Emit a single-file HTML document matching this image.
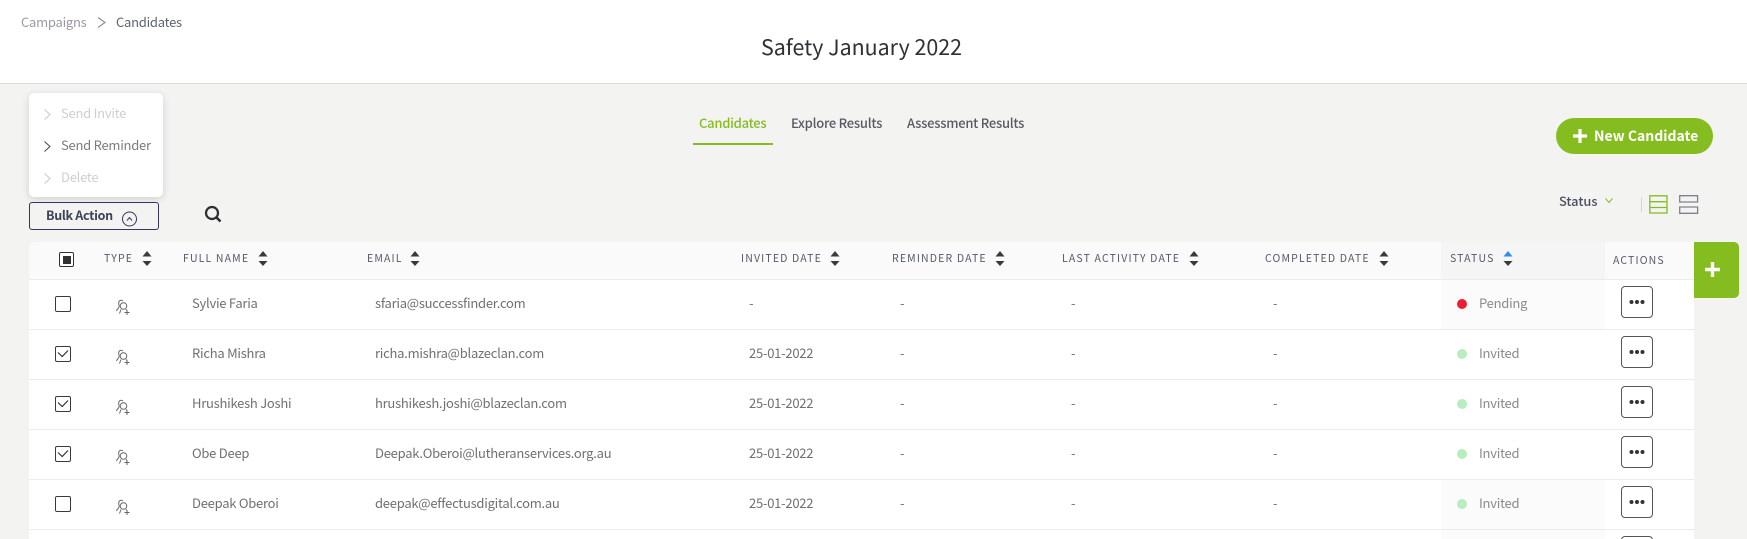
<!DOCTYPE html>
<html><head><meta charset="utf-8"><style>
html,body{margin:0;padding:0;width:1747px;height:539px;overflow:hidden}
#p{width:1747px;height:539px;position:relative;overflow:hidden;background:#f3f3f2;font-family:"Noto Sans CJK JP","Liberation Sans",sans-serif;font-size:13px;letter-spacing:-.25px;color:#707070}
.a{position:absolute}
.t{position:absolute;white-space:nowrap;line-height:20px;height:20px}
.h{font-size:10.5px;letter-spacing:1.15px;color:#555a66}
.row{position:absolute;left:29px;width:1665px;height:49px;background:#fff;border-bottom:1px solid #ececec}
.cb{position:absolute;left:26px;top:16px;width:14px;height:14px;border:1.3px solid #3a3a3a;border-radius:2px;background:#fff}
.btn{position:absolute;left:1592px;top:6px;width:30px;height:30px;border:1.3px solid #555;border-radius:4px;background:#fff}
.dot{position:absolute;left:1428px;top:19px;width:10px;height:10px;border-radius:50%;background:#b9ecbf}
.row .t{top:13px}
.s{position:absolute;width:10px;height:16px}
svg{display:block;overflow:visible}
</style></head><body><div id="p">
<svg width="0" height="0" style="position:absolute"><defs>
<symbol id="sort" viewBox="0 0 10 16"><path d="M5 0L9.5 5.5H.5Z" fill="#3a3a3a"/><path d="M.5 10H9.5L5 15Z" fill="#3a3a3a"/></symbol>
<symbol id="ty" viewBox="0 0 14 16"><g fill="none" stroke="#666" stroke-width="1"><circle cx="7.5" cy="7" r="3.3"/><path d="M7 2C5 .5 2.5 1.5 2.7 4.5 2.8 6 3.5 7 3 8 2.5 9.5 1 10 .5 12"/><path d="M5 10.5L3.5 14.5M10 10.3L11 11.5"/><path d="M11 11V16M8.5 13.5H13.5"/></g></symbol>
<symbol id="dots" viewBox="0 0 30 30"><g fill="#333"><circle cx="9.5" cy="15" r="2"/><circle cx="15" cy="15" r="2"/><circle cx="20.5" cy="15" r="2"/></g></symbol>
<symbol id="ck" viewBox="0 0 14 14"><path d="M2 5.5L6.2 9.5 12 3.5" fill="none" stroke="#333" stroke-width="1.2"/></symbol>
</defs></svg>

<!-- header -->
<div class="a" style="left:0;top:0;width:1747px;height:83px;background:#fff;border-bottom:1.5px solid #dcdcdc"></div>
<div class="t" style="left:21px;top:12px;color:#9b97a3">Campaigns</div>
<svg class="a" style="left:97px;top:17px" width="9" height="11"><path d="M1 .5L8 5.5 1 10.5" fill="none" stroke="#8c8c8c" stroke-width="1.1"/></svg>
<div class="t" style="left:116px;top:12px;color:#5c6270">Candidates</div>
<div class="t" style="left:761px;top:37px;font-size:21.4px;letter-spacing:0;color:#2f3136">Safety January 2022</div>

<!-- tabs -->
<div class="t" style="left:699px;top:113px;color:#85bc20;font-weight:500">Candidates</div>
<div class="a" style="left:693px;top:143px;width:80px;height:2px;background:#85bc20"></div>
<div class="t" style="left:791px;top:113px;color:#565a62;font-weight:500">Explore Results</div>
<div class="t" style="left:907px;top:113px;color:#565a62;font-weight:500">Assessment Results</div>

<!-- bulk menu -->
<div class="a" style="left:29px;top:93px;width:134px;height:104px;background:#fff;border-radius:5px;box-shadow:0 2px 8px rgba(0,0,0,.14)"></div>
<svg class="a" style="left:44px;top:109px" width="7" height="11"><path d="M.5 .5L6 5.5 .5 10.5" fill="none" stroke="#c9c9c9" stroke-width="1"/></svg>
<div class="t" style="left:61px;top:103px;color:#cfcfcf">Send Invite</div>
<svg class="a" style="left:44px;top:141px" width="7" height="11"><path d="M.5 .5L6 5.5 .5 10.5" fill="none" stroke="#444" stroke-width="1"/></svg>
<div class="t" style="left:61px;top:135px;color:#7c7c7c">Send Reminder</div>
<svg class="a" style="left:44px;top:173px" width="7" height="11"><path d="M.5 .5L6 5.5 .5 10.5" fill="none" stroke="#c9c9c9" stroke-width="1"/></svg>
<div class="t" style="left:61px;top:167px;color:#cfcfcf">Delete</div>

<!-- bulk button -->
<div class="a" style="left:29px;top:202px;width:128px;height:26px;border:1px solid #35355f;border-radius:3px;background:#f3f3f2"></div>
<div class="t" style="left:46px;top:205px;color:#3c4356;font-weight:700;font-size:12.5px;letter-spacing:-.3px">Bulk Action</div>
<svg class="a" style="left:122px;top:211px" width="16" height="16"><circle cx="7.5" cy="8" r="7" fill="none" stroke="#35355f" stroke-width="1"/><path d="M5 9.5L7.5 6.5 10 9.5" fill="none" stroke="#35355f" stroke-width="1"/></svg>
<svg class="a" style="left:204px;top:205px" width="18" height="18"><circle cx="8" cy="8" r="6" fill="none" stroke="#2e2e2e" stroke-width="2.2"/><path d="M12.5 12.5L16.5 16.5" stroke="#2e2e2e" stroke-width="2.6"/></svg>

<!-- new candidate -->
<div class="a" style="left:1556px;top:118px;width:157px;height:36px;border-radius:18px;background:#85bc20"></div>
<svg class="a" style="left:1573px;top:129px" width="14" height="14"><path d="M7 0V14M0 7H14" stroke="#fff" stroke-width="3.2"/></svg>
<div class="t" style="left:1594px;top:126px;color:#fff;font-weight:700;font-size:14px;letter-spacing:0">New Candidate</div>

<!-- status filter + views -->
<div class="t" style="left:1559px;top:191px;color:#4a4d60;font-weight:500;font-size:12.8px;letter-spacing:0">Status</div>
<svg class="a" style="left:1605px;top:198px" width="8" height="6"><path d="M.5 .5L4 4.5 7.5 .5" fill="none" stroke="#85bc20" stroke-width="1"/></svg>
<div class="a" style="left:1641px;top:197px;width:1px;height:15px;background:#d4d4d2"></div>
<svg class="a" style="left:1649px;top:195px" width="19" height="19"><path d="M.8.8H18V18H.8ZM.8 6.7H18M.8 12.5H18" fill="none" stroke="#85bc20" stroke-width="1.3"/></svg>
<svg class="a" style="left:1679px;top:195px" width="20" height="19"><path d="M.7.7H18.6V7H.7ZM.7 12H18.6V18.3H.7Z" fill="none" stroke="#80808f" stroke-width="1.3"/></svg>

<!-- green tab -->
<div class="a" style="left:1690px;top:242px;width:49px;height:56px;background:#85bc20;border-radius:5px"></div>
<svg class="a" style="left:1705px;top:262px" width="15" height="15"><path d="M7.5 0V15M0 7.5H15" stroke="#fff" stroke-width="3.4"/></svg>

<!-- table head -->
<div class="a" style="left:29px;top:242px;width:1665px;height:37px;background:#fafafa;border-radius:4px 0 0 0;border-bottom:1px solid #ececec"></div>
<div class="a" style="left:1441px;top:242px;width:164px;height:37px;background:#f5f5f5"></div>
<div class="a" style="left:59px;top:252px;width:13px;height:13px;border:1.5px solid #333;border-radius:2px;background:#fff"></div>
<div class="a" style="left:63px;top:256px;width:8px;height:8px;background:#333"></div>
<div class="t h" style="left:104px;top:249px">TYPE</div><svg class="s" style="left:142px;top:251px"><use href="#sort"/></svg>
<div class="t h" style="left:183px;top:249px">FULL NAME</div><svg class="s" style="left:258px;top:251px"><use href="#sort"/></svg>
<div class="t h" style="left:367px;top:249px">EMAIL</div><svg class="s" style="left:410px;top:251px"><use href="#sort"/></svg>
<div class="t h" style="left:741px;top:249px">INVITED DATE</div><svg class="s" style="left:830px;top:251px"><use href="#sort"/></svg>
<div class="t h" style="left:892px;top:249px">REMINDER DATE</div><svg class="s" style="left:995px;top:251px"><use href="#sort"/></svg>
<div class="t h" style="left:1062px;top:249px">LAST ACTIVITY DATE</div><svg class="s" style="left:1189px;top:251px"><use href="#sort"/></svg>
<div class="t h" style="left:1265px;top:249px">COMPLETED DATE</div><svg class="s" style="left:1379px;top:251px"><use href="#sort"/></svg>
<div class="t h" style="left:1450px;top:249px">STATUS</div>
<svg class="s" style="left:1503px;top:251px" viewBox="0 0 10 16"><path d="M5 0L9.5 5.5H.5Z" fill="#2d8cf0"/><path d="M.5 10H9.5L5 15Z" fill="#3a3a3a"/></svg>
<div class="t h" style="left:1613px;top:251px">ACTIONS</div>

<!-- rows -->
<div class="row" style="top:280px">
<div class="a" style="left:1412px;top:0;width:164px;height:49px;background:#fbfbfb"></div>
<div class="cb"></div><svg class="a" style="left:87px;top:19px" width="14" height="16"><use href="#ty"/></svg>
<div class="t" style="left:163px">Sylvie Faria</div><div class="t" style="left:346px">sfaria@successfinder.com</div><div class="t" style="left:720px">-</div><div class="t" style="left:871px">-</div><div class="t" style="left:1042px">-</div><div class="t" style="left:1244px">-</div>
<div class="dot" style="background:#f01c33"></div><div class="t" style="left:1450px;color:#8a8a8a">Pending</div><div class="btn"><svg width="30" height="30"><use href="#dots"/></svg></div></div>

<div class="row" style="top:330px">
<div class="cb"><svg width="14" height="14"><use href="#ck"/></svg></div><svg class="a" style="left:87px;top:19px" width="14" height="16"><use href="#ty"/></svg>
<div class="t" style="left:163px">Richa Mishra</div><div class="t" style="left:346px">richa.mishra@blazeclan.com</div><div class="t" style="left:720px">25-01-2022</div><div class="t" style="left:871px">-</div><div class="t" style="left:1042px">-</div><div class="t" style="left:1244px">-</div>
<div class="dot"></div><div class="t" style="left:1450px;color:#8a8a8a">Invited</div><div class="btn"><svg width="30" height="30"><use href="#dots"/></svg></div></div>

<div class="row" style="top:380px">
<div class="cb"><svg width="14" height="14"><use href="#ck"/></svg></div><svg class="a" style="left:87px;top:19px" width="14" height="16"><use href="#ty"/></svg>
<div class="t" style="left:163px">Hrushikesh Joshi</div><div class="t" style="left:346px">hrushikesh.joshi@blazeclan.com</div><div class="t" style="left:720px">25-01-2022</div><div class="t" style="left:871px">-</div><div class="t" style="left:1042px">-</div><div class="t" style="left:1244px">-</div>
<div class="dot"></div><div class="t" style="left:1450px;color:#8a8a8a">Invited</div><div class="btn"><svg width="30" height="30"><use href="#dots"/></svg></div></div>

<div class="row" style="top:430px">
<div class="cb"><svg width="14" height="14"><use href="#ck"/></svg></div><svg class="a" style="left:87px;top:19px" width="14" height="16"><use href="#ty"/></svg>
<div class="t" style="left:163px">Obe Deep</div><div class="t" style="left:346px">Deepak.Oberoi@lutheranservices.org.au</div><div class="t" style="left:720px">25-01-2022</div><div class="t" style="left:871px">-</div><div class="t" style="left:1042px">-</div><div class="t" style="left:1244px">-</div>
<div class="dot"></div><div class="t" style="left:1450px;color:#8a8a8a">Invited</div><div class="btn"><svg width="30" height="30"><use href="#dots"/></svg></div></div>

<div class="row" style="top:480px">
<div class="a" style="left:1412px;top:0;width:164px;height:49px;background:#fbfbfb"></div>
<div class="cb"></div><svg class="a" style="left:87px;top:19px" width="14" height="16"><use href="#ty"/></svg>
<div class="t" style="left:163px">Deepak Oberoi</div><div class="t" style="left:346px">deepak@effectusdigital.com.au</div><div class="t" style="left:720px">25-01-2022</div><div class="t" style="left:871px">-</div><div class="t" style="left:1042px">-</div><div class="t" style="left:1244px">-</div>
<div class="dot"></div><div class="t" style="left:1450px;color:#8a8a8a">Invited</div><div class="btn"><svg width="30" height="30"><use href="#dots"/></svg></div></div>

<div class="row" style="top:530px;height:9px;border-bottom:0;overflow:hidden">
<div class="a" style="left:1412px;top:0;width:164px;height:9px;background:#fbfbfb"></div>
<div class="btn" style="height:10px;border-bottom:0;border-radius:4px 4px 0 0"></div></div>
</div></body></html>
